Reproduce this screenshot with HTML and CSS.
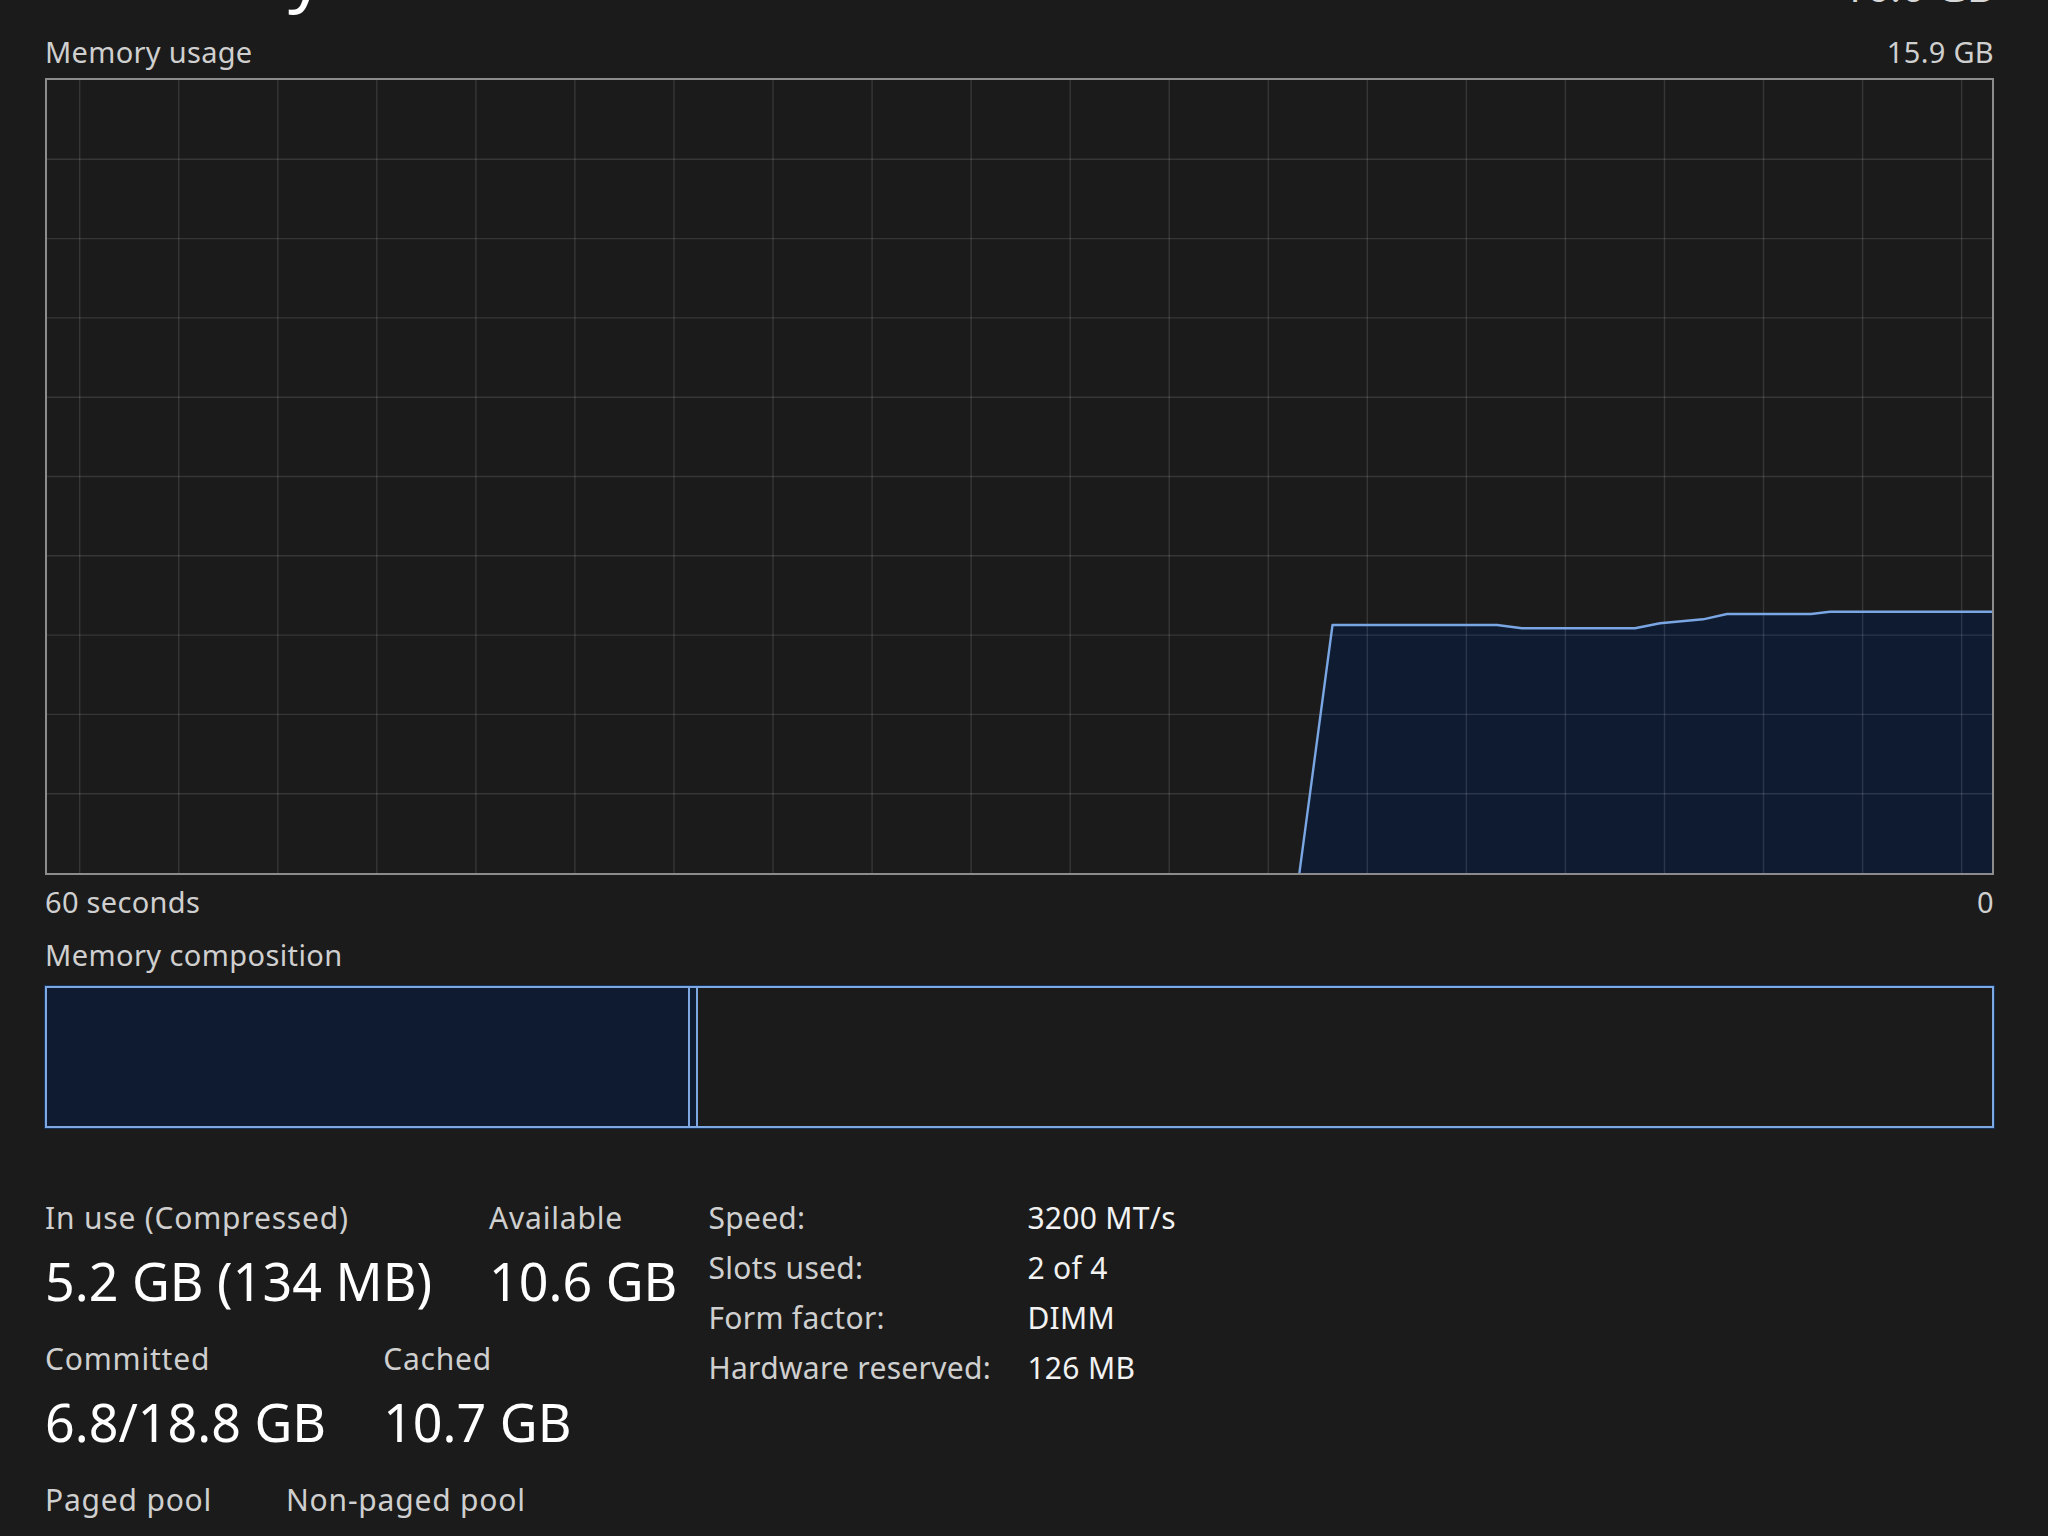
FILE: index.html
```html
<!DOCTYPE html>
<html lang="en">
<head>
    <meta charset="UTF-8">
    <title>Task Manager - Memory</title>
    <link rel="stylesheet" href="styles.css">
</head>
<body>
    <div class="page">
        <!-- Title row (mostly scrolled off the top) -->
        <div class="head">
            <h1 class="title">Memory</h1>
            <div class="capacity">16.0 GB</div>
        </div>

        <!-- Usage graph -->
        <div class="axis-row">
            <span>Memory usage</span>
            <span>15.9 GB</span>
        </div>
        <div class="chart">
            <svg width="1945" height="793" viewBox="0 0 1945 793">
                <polygon class="area" points="1252,796 1285.5,545 1450,545 1475,548.3 1588,548.3 1613,543.3 1656,539.3 1680,534 1764,534 1783,531.7 1947,531.7 1947,796"></polygon>
                <g class="grid">
                    <line x1="32.7" y1="0" x2="32.7" y2="793"></line>
                    <line x1="131.7" y1="0" x2="131.7" y2="793"></line>
                    <line x1="230.8" y1="0" x2="230.8" y2="793"></line>
                    <line x1="329.8" y1="0" x2="329.8" y2="793"></line>
                    <line x1="428.9" y1="0" x2="428.9" y2="793"></line>
                    <line x1="527.9" y1="0" x2="527.9" y2="793"></line>
                    <line x1="627" y1="0" x2="627" y2="793"></line>
                    <line x1="726" y1="0" x2="726" y2="793"></line>
                    <line x1="825.1" y1="0" x2="825.1" y2="793"></line>
                    <line x1="924.1" y1="0" x2="924.1" y2="793"></line>
                    <line x1="1023.2" y1="0" x2="1023.2" y2="793"></line>
                    <line x1="1122.2" y1="0" x2="1122.2" y2="793"></line>
                    <line x1="1221.3" y1="0" x2="1221.3" y2="793"></line>
                    <line x1="1320.3" y1="0" x2="1320.3" y2="793"></line>
                    <line x1="1419.4" y1="0" x2="1419.4" y2="793"></line>
                    <line x1="1518.4" y1="0" x2="1518.4" y2="793"></line>
                    <line x1="1617.5" y1="0" x2="1617.5" y2="793"></line>
                    <line x1="1716.5" y1="0" x2="1716.5" y2="793"></line>
                    <line x1="1815.6" y1="0" x2="1815.6" y2="793"></line>
                    <line x1="1914.6" y1="0" x2="1914.6" y2="793"></line>
                    <line x1="0" y1="79.3" x2="1945" y2="79.3"></line>
                    <line x1="0" y1="158.6" x2="1945" y2="158.6"></line>
                    <line x1="0" y1="237.9" x2="1945" y2="237.9"></line>
                    <line x1="0" y1="317.2" x2="1945" y2="317.2"></line>
                    <line x1="0" y1="396.5" x2="1945" y2="396.5"></line>
                    <line x1="0" y1="475.8" x2="1945" y2="475.8"></line>
                    <line x1="0" y1="555.1" x2="1945" y2="555.1"></line>
                    <line x1="0" y1="634.4" x2="1945" y2="634.4"></line>
                    <line x1="0" y1="713.7" x2="1945" y2="713.7"></line>
                </g>
                <polyline class="trace" points="1252,796 1285.5,545 1450,545 1475,548.3 1588,548.3 1613,543.3 1656,539.3 1680,534 1764,534 1783,531.7 1947,531.7"></polyline>
            </svg>
        </div>
        <div class="axis-row under">
            <span>60 seconds</span>
            <span>0</span>
        </div>

        <!-- Composition bar -->
        <div class="section-label">Memory composition</div>
        <div class="composition">
            <div class="seg" style="width: 33.07%"></div>
            <div class="seg" style="width: 0.41%"></div>
        </div>

        <!-- Numbers -->
        <div class="details">
            <div class="stats">
                <div class="stat-row">
                    <div class="stat">
                        <div class="stat-label">In use (Compressed)</div>
                        <div class="stat-value">5.2 GB (134 MB)</div>
                    </div>
                    <div class="stat">
                        <div class="stat-label">Available</div>
                        <div class="stat-value">10.6 GB</div>
                    </div>
                </div>
                <div class="stat-row">
                    <div class="stat">
                        <div class="stat-label">Committed</div>
                        <div class="stat-value">6.8/18.8 GB</div>
                    </div>
                    <div class="stat">
                        <div class="stat-label">Cached</div>
                        <div class="stat-value">10.7 GB</div>
                    </div>
                </div>
                <div class="stat-row">
                    <div class="stat paged">
                        <div class="stat-label">Paged pool</div>
                    </div>
                    <div class="stat">
                        <div class="stat-label">Non-paged pool</div>
                    </div>
                </div>
            </div>

            <div class="specs">
                <span class="spec-name">Speed:</span><span class="spec-val">3200 MT/s</span>
                <span class="spec-name">Slots used:</span><span class="spec-val">2 of 4</span>
                <span class="spec-name">Form factor:</span><span class="spec-val">DIMM</span>
                <span class="spec-name">Hardware reserved:</span><span class="spec-val">126 MB</span>
            </div>
        </div>
    </div>
</body>
</html>
```

FILE: styles.css
```css
/* General Styles */
body {
    margin: 0;
    background-color: #1b1b1b;
    color: #cfcfcf;
    font-family: "Noto Sans", "Open Sans", sans-serif;
    font-size: 29px;
    line-height: 36px;
    overflow: hidden;
}

.page {
    padding: 0 54px 0 45px;
}

/* Title row, cut off by the top edge */
.head {
    display: flex;
    justify-content: space-between;
    height: 34px;
}

.title {
    margin: -65px 0 0;
    font-size: 71px;
    line-height: 71px;
    font-weight: normal;
    color: #ffffff;
}

.capacity {
    margin-top: -35px;
    font-size: 42px;
    line-height: 42px;
    color: #d8d8d8;
}

/* Graph */
.axis-row {
    display: flex;
    justify-content: space-between;
    margin-bottom: 8px;
    letter-spacing: 0.3px;
}

.axis-row.under {
    margin: 9px 0 0;
}

.chart {
    height: 797px;
    border: 2px solid #8c8c8c;
    box-sizing: border-box;
}

.chart svg {
    display: block;
}

.area {
    fill: #0e1b31;
}

.grid line {
    stroke: rgba(255, 255, 255, 0.12);
    stroke-width: 1.4;
}

.trace {
    fill: none;
    stroke: #7aa6e3;
    stroke-width: 2.4;
    stroke-linejoin: round;
}

/* Composition */
.section-label {
    margin: 17px 0 13px;
    letter-spacing: 0.4px;
}

.composition {
    display: flex;
    height: 142px;
    border: 2px solid #7ea8e2;
    box-sizing: border-box;
    box-shadow: 0 0 0 1px #16315a;
}

.seg {
    background-color: #0e1b31;
    border-right: 2px solid #7ea8e2;
    box-sizing: border-box;
}

/* Numbers */
.details {
    display: flex;
    align-items: flex-start;
    gap: 31px;
    margin-top: 65px;
}

.stats {
    padding-top: 7px;
}

.stat-row {
    display: flex;
    gap: 57px;
}

.stat-row + .stat-row {
    margin-top: 30px;
}

.stat.paged {
    min-width: 184px;
}

.stat-label {
    font-size: 30px;
    letter-spacing: 0.8px;
}

.stat-value {
    margin-top: 15px;
    font-size: 52px;
    line-height: 60px;
    color: #ffffff;
}

.specs {
    display: grid;
    grid-template-columns: 319px auto;
    font-size: 30px;
    line-height: 50px;
    letter-spacing: 0.3px;
}

.spec-val {
    color: #f2f2f2;
}
```
